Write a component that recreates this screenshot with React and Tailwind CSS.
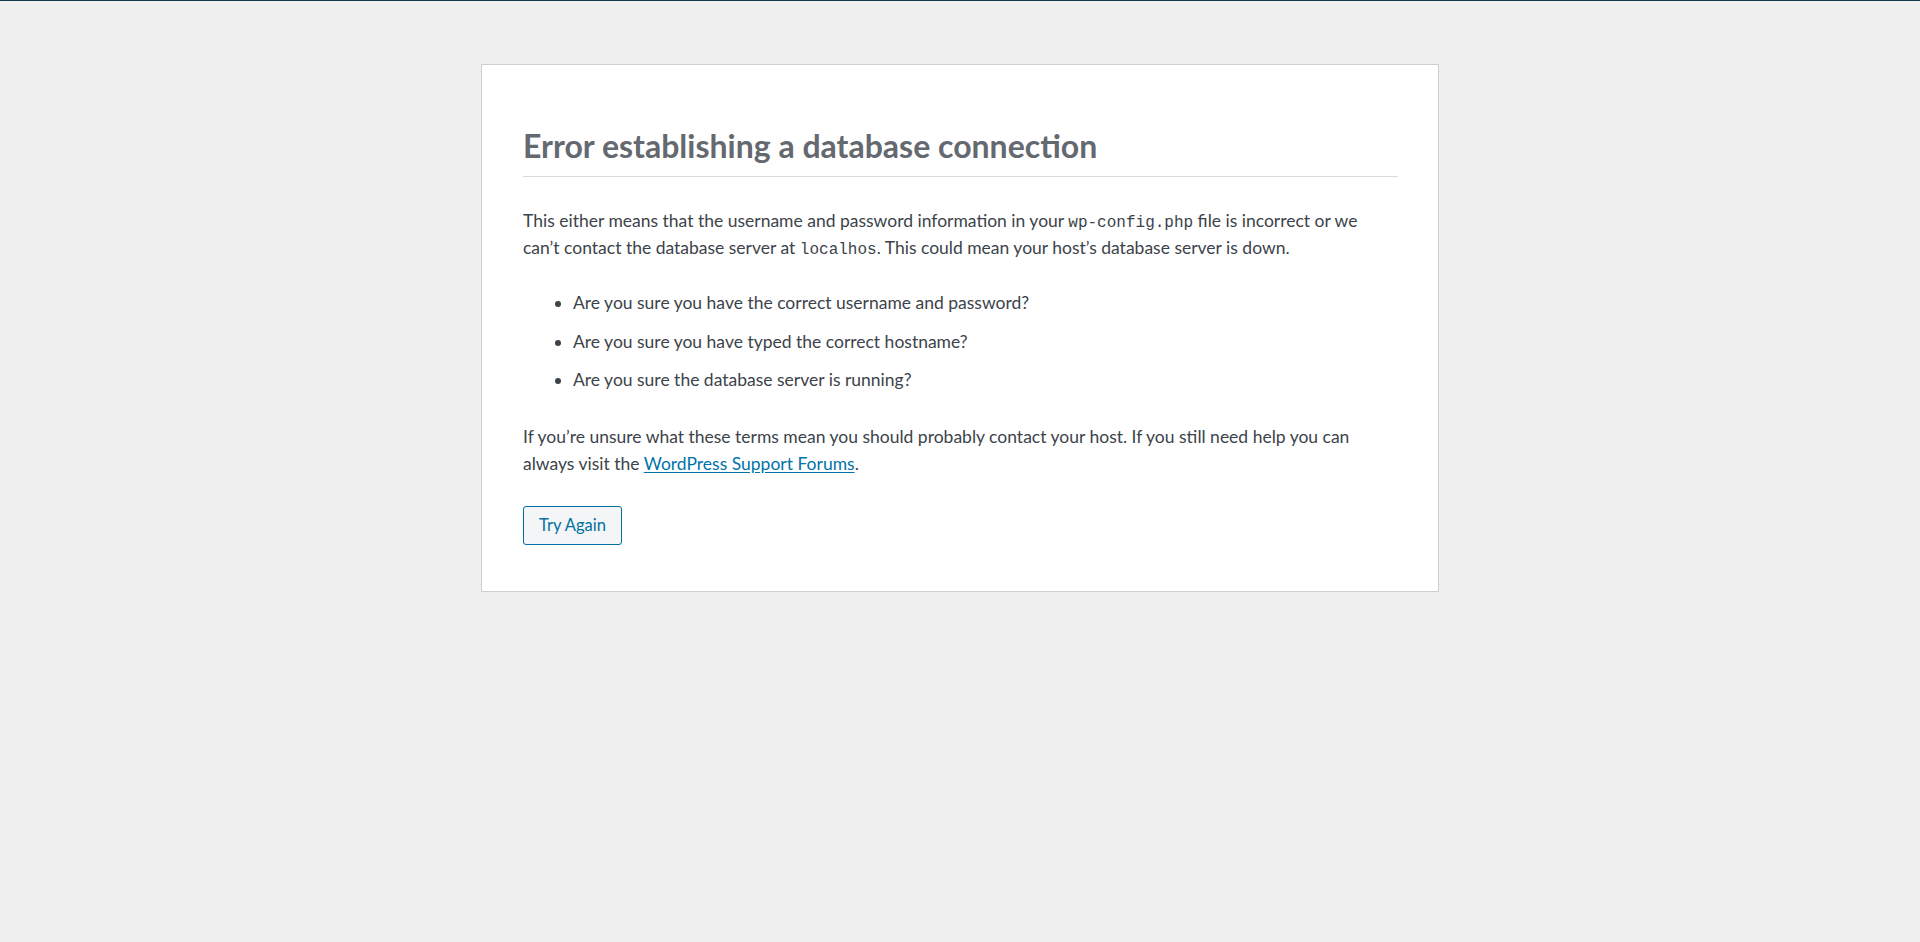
import React from "react";

const App = () => {
    return (
        <div className="min-h-[942px] bg-[#f0f0f1] font-['Lato','Segoe_UI',sans-serif] text-[#3c434a]">
            {/* thin strip along the top edge */}
            <div className="h-px bg-[#12394a]" />

            <div id="error-page" className="mx-auto mt-[63px] w-[958px] border border-[#ccd0d4] bg-white pt-[61px] pb-[46px] pl-[41px] pr-[40px]">
                <h1 className="border-b border-[#dadada] pb-[11px] text-[32px] leading-[39px] font-bold text-[#646970]">
                    Error establishing a database connection
                </h1>

                <p className="mt-[30px] text-[17.5px] leading-[27px]">
                    This either means that the username and password information in your{" "}
                    <code className="font-['Liberation_Mono',monospace] text-[16px] leading-none">wp-config.php</code> file is incorrect or we can’t contact the database server at{" "}
                    <code className="font-['Liberation_Mono',monospace] text-[16px] leading-none">localhos</code>. This could mean your host’s database server is down.
                </p>

                <ul className="mt-[28px] flex list-disc flex-col gap-[11.5px] pl-[50px] text-[17.5px] leading-[27px]">
                    <li>Are you sure you have the correct username and password?</li>
                    <li>Are you sure you have typed the correct hostname?</li>
                    <li>Are you sure the database server is running?</li>
                </ul>

                <p className="mt-[30px] text-[17.5px] leading-[27px]">
                    If you’re unsure what these terms mean you should probably contact your host. If you still need help you can always visit the{" "}
                    <a href="#" className="text-[#0073aa] underline underline-offset-2">WordPress Support Forums</a>.
                </p>

                <button
                    type="button"
                    className="mt-[29px] flex h-[39px] w-[99px] items-center justify-center rounded-[3px] border border-[#0071a1] bg-[#f3f5f6] text-[16.5px] text-[#0071a1]"
                >
                    Try Again
                </button>
            </div>
        </div>
    );
};

export default App;
